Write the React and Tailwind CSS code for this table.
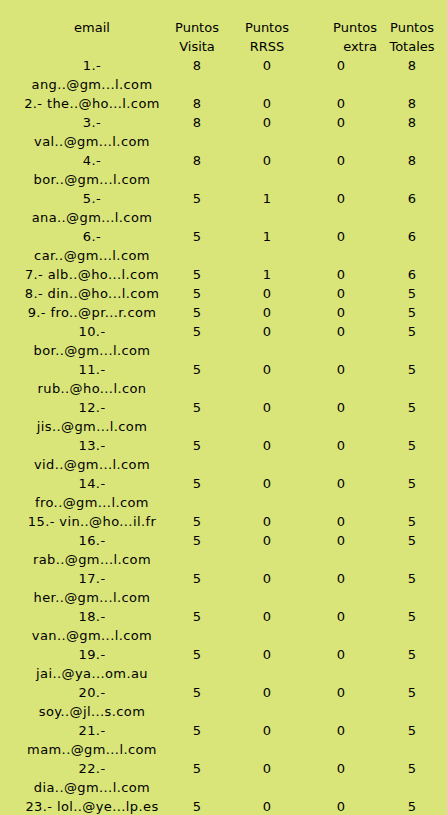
const rows = [
  ["1.-", "ang..@gm...l.com", 8, 0, 0, 8],
  ["2.- the..@ho...l.com", null, 8, 0, 0, 8],
  ["3.-", "val..@gm...l.com", 8, 0, 0, 8],
  ["4.-", "bor..@gm...l.com", 8, 0, 0, 8],
  ["5.-", "ana..@gm...l.com", 5, 1, 0, 6],
  ["6.-", "car..@gm...l.com", 5, 1, 0, 6],
  ["7.- alb..@ho...l.com", null, 5, 1, 0, 6],
  ["8.- din..@ho...l.com", null, 5, 0, 0, 5],
  ["9.- fro..@pr...r.com", null, 5, 0, 0, 5],
  ["10.-", "bor..@gm...l.com", 5, 0, 0, 5],
  ["11.-", "rub..@ho...l.con", 5, 0, 0, 5],
  ["12.-", "jis..@gm...l.com", 5, 0, 0, 5],
  ["13.-", "vid..@gm...l.com", 5, 0, 0, 5],
  ["14.-", "fro..@gm...l.com", 5, 0, 0, 5],
  ["15.- vin..@ho...il.fr", null, 5, 0, 0, 5],
  ["16.-", "rab..@gm...l.com", 5, 0, 0, 5],
  ["17.-", "her..@gm...l.com", 5, 0, 0, 5],
  ["18.-", "van..@gm...l.com", 5, 0, 0, 5],
  ["19.-", "jai..@ya...om.au", 5, 0, 0, 5],
  ["20.-", "soy..@jl...s.com", 5, 0, 0, 5],
  ["21.-", "mam..@gm...l.com", 5, 0, 0, 5],
  ["22.-", "dia..@gm...l.com", 5, 0, 0, 5],
  ["23.- lol..@ye...lp.es", null, 5, 0, 0, 5],
];

export default function App() {
  return (
    <div className="min-h-[815px] w-[447px] bg-[#d9e579] pt-[18px] pl-[20px] text-[13px] leading-[19px] text-black font-['DejaVu_Sans',sans-serif] overflow-hidden">
      <div className="grid grid-cols-[144px_66px_74px_74px_68px] items-start">
        {/* header */}
        <div className="text-center">email</div>
        <div className="text-center">
          Puntos
          <br />
          Visita
        </div>
        <div className="text-center">
          Puntos
          <br />
          RRSS
        </div>
        <div className="text-right pr-[1px]">
          Puntos
          <br />
          extra
        </div>
        <div className="text-center">
          Puntos
          <br />
          Totales
        </div>

        {rows.map((r, i) => (
          <div key={i} className="contents">
            <div className="text-center whitespace-nowrap tracking-[0.4px]">
              {r[0]}
              {r[1] && (
                <>
                  <br />
                  {r[1]}
                </>
              )}
            </div>
            <div className="text-center">{r[2]}</div>
            <div className="text-center">{r[3]}</div>
            <div className="text-center">{r[4]}</div>
            <div className="text-center">{r[5]}</div>
          </div>
        ))}
      </div>
    </div>
  );
}
